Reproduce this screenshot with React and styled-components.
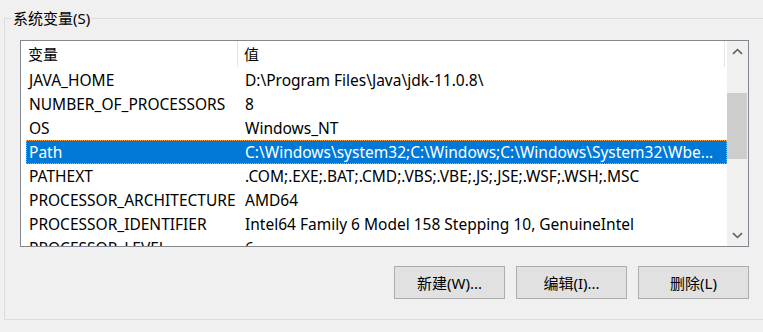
import React from 'react';
import styled, {createGlobalStyle} from "styled-components";

const rows = [
    {name: "JAVA_HOME", value: "D:\\Program Files\\Java\\jdk-11.0.8\\"},
    {name: "NUMBER_OF_PROCESSORS", value: "8"},
    {name: "OS", value: "Windows_NT"},
    {name: "Path", value: "C:\\Windows\\system32;C:\\Windows;C:\\Windows\\System32\\Wbe...", selected: true},
    {name: "PATHEXT", value: ".COM;.EXE;.BAT;.CMD;.VBS;.VBE;.JS;.JSE;.WSF;.WSH;.MSC"},
    {name: "PROCESSOR_ARCHITECTURE", value: "AMD64"},
    {name: "PROCESSOR_IDENTIFIER", value: "Intel64 Family 6 Model 158 Stepping 10, GenuineIntel"},
    {name: "PROCESSOR_LEVEL", value: "6"},
];

function Chevron({down}) {
    return (
        <svg width="11" height="7" viewBox="0 0 11 7">
            <path
                d={down ? "M1 1.2 L5.5 5.5 L10 1.2" : "M1 5.8 L5.5 1.5 L10 5.8"}
                fill="none"
                stroke="#606060"
                strokeWidth="1.6"
            />
        </svg>
    )
}

export default function App() {
    return (
        <>
            <GlobalStyle/>
            <Group>
                <Legend>系统变量(S)</Legend>
                <Content>
                    <ListView>
                        <Table>
                            <HeaderRow>
                                <HeaderCell $width={217} $pad={7}>变量</HeaderCell>
                                <HeaderCell $width={487} $pad={6}>值</HeaderCell>
                            </HeaderRow>
                            {rows.map(row => (
                                <Row key={row.name} $selected={row.selected}>
                                    <NameCell>{row.name}</NameCell>
                                    <ValueCell>{row.value}</ValueCell>
                                </Row>
                            ))}
                        </Table>
                        <ScrollBar>
                            <ArrowButton><Chevron/></ArrowButton>
                            <Track>
                                <Thumb/>
                            </Track>
                            <ArrowButton><Chevron down/></ArrowButton>
                        </ScrollBar>
                    </ListView>
                    <ButtonRow>
                        <Button>新建(W)...</Button>
                        <Button>编辑(I)...</Button>
                        <Button>删除(L)</Button>
                    </ButtonRow>
                </Content>
            </Group>
        </>
    )
}

const GlobalStyle = createGlobalStyle`
    body {
        margin: 0;
        background: #f0f0f0;
        overflow: hidden;
        font-family: "Noto Sans", "Noto Sans CJK SC", sans-serif;
        font-size: 15px;
        color: #000;
    }
`;

const Group = styled.fieldset`
    margin: 8px 0 0 4px;
    padding: 0 0 20px 0;
    border: 1px solid #dcdcdc;
    width: 800px;
    min-width: 0;
    box-sizing: border-box;
`;

const Legend = styled.legend`
    margin-left: 7px;
    padding: 0 1px;
    line-height: 20px;
    font-size: 15px;
`;

const Content = styled.div`
    width: 729px;
    padding-left: 15px;
    margin-top: 12px;
`;

const ListView = styled.div`
    display: flex;
    height: 207px;
    border: 1px solid #828790;
    box-sizing: border-box;
    background: #fff;
`;

const Table = styled.div`
    flex: 1;
    overflow: hidden;
`;

const HeaderRow = styled.div`
    display: flex;
    height: 27px;
`;

const HeaderCell = styled.div`
    width: ${props => props.$width}px;
    padding-left: ${props => props.$pad}px;
    box-sizing: border-box;
    height: 26px;
    line-height: 26px;
    border-right: 1px solid #e5e5e5;
    white-space: nowrap;
`;

const Row = styled.div`
    display: flex;
    height: 24px;
    margin-left: 5px;
    box-sizing: border-box;
    line-height: 22px;
    font-size: 15.5px;
    border: 1px ${props => props.$selected ? "dotted #f7a043" : "solid transparent"};
    background: ${props => props.$selected ? "#0078d7" : "transparent"};
    color: ${props => props.$selected ? "#fff" : "#000"};
    white-space: nowrap;
`;

const NameCell = styled.div`
    width: 211px;
    padding-left: 2px;
    box-sizing: border-box;
    overflow: hidden;
`;

const ValueCell = styled.div`
    flex: 1;
    padding-left: 7px;
    overflow: hidden;
`;

const ScrollBar = styled.div`
    width: 21px;
    display: flex;
    flex-direction: column;
    background: #f0f0f0;
`;

const ArrowButton = styled.div`
    height: 21px;
    display: flex;
    align-items: center;
    justify-content: center;
    padding-right: 1px;
`;

const Track = styled.div`
    flex: 1;
    padding-top: 31px;
`;

const Thumb = styled.div`
    width: 20px;
    height: 66px;
    background: #cdcdcd;
`;

const ButtonRow = styled.div`
    display: flex;
    justify-content: flex-end;
    gap: 11px;
    margin-top: 19px;
`;

const Button = styled.button`
    width: 111px;
    height: 33px;
    background: #e1e1e1;
    border: 1px solid #adadad;
    font-family: inherit;
    font-size: 15px;
    color: #000;
    padding: 0;
`;
